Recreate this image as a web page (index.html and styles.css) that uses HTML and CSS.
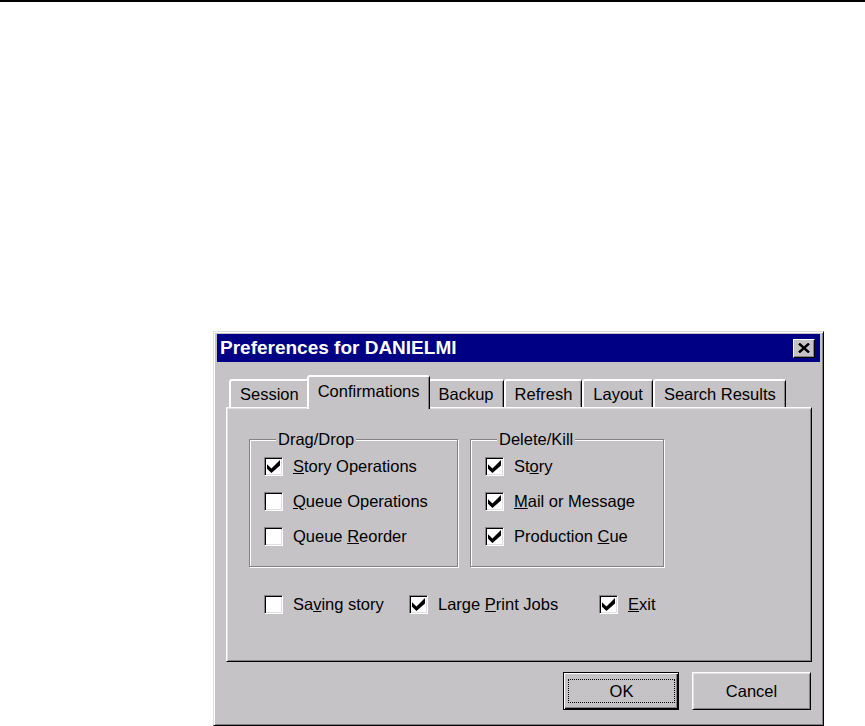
FILE: index.html
```html
<!DOCTYPE html>
<html lang="en">
<head>
    <meta charset="UTF-8" />
    <title>Preferences for DANIELMI</title>
    <link rel="stylesheet" href="styles.css">
</head>
<body>
    <div class="rule"></div>

    <div class="dialog">
        <div class="titlebar">
            <span class="title">Preferences for DANIELMI</span>
            <button class="close" aria-label="Close">
                <svg width="12" height="10" viewBox="0 0 12 10"><path d="M1 0.5 L11 9.5 M11 0.5 L1 9.5" stroke="#000" stroke-width="2.4" /></svg>
            </button>
        </div>

        <div class="dialog-body">
            <div class="tabs">
                <div class="tab">Session</div>
                <div class="tab active">Confirmations</div>
                <div class="tab">Backup</div>
                <div class="tab">Refresh</div>
                <div class="tab">Layout</div>
                <div class="tab">Search Results</div>
            </div>

            <div class="panel">
                <div class="groups">
                    <fieldset class="group group-drag">
                        <legend>Drag/Drop</legend>
                        <div class="rows">
                            <label class="check"><span class="box"><svg width="13" height="13" viewBox="0 0 7 7"><polygon points="0,2.3 2.4,4.6 7,0 7,2.9 2.4,7 0,4.7" /></svg></span><span><u>S</u>tory Operations</span></label>
                            <label class="check"><span class="box"></span><span><u>Q</u>ueue Operations</span></label>
                            <label class="check"><span class="box"></span><span>Queue <u>R</u>eorder</span></label>
                        </div>
                    </fieldset>

                    <fieldset class="group group-kill">
                        <legend>Delete/Kill</legend>
                        <div class="rows">
                            <label class="check"><span class="box"><svg width="13" height="13" viewBox="0 0 7 7"><polygon points="0,2.3 2.4,4.6 7,0 7,2.9 2.4,7 0,4.7" /></svg></span><span>St<u>o</u>ry</span></label>
                            <label class="check"><span class="box"><svg width="13" height="13" viewBox="0 0 7 7"><polygon points="0,2.3 2.4,4.6 7,0 7,2.9 2.4,7 0,4.7" /></svg></span><span><u>M</u>ail or Message</span></label>
                            <label class="check"><span class="box"><svg width="13" height="13" viewBox="0 0 7 7"><polygon points="0,2.3 2.4,4.6 7,0 7,2.9 2.4,7 0,4.7" /></svg></span><span>Production <u>C</u>ue</span></label>
                        </div>
                    </fieldset>
                </div>

                <div class="extra">
                    <label class="check"><span class="box"></span><span>Sa<u>v</u>ing story</span></label>
                    <label class="check"><span class="box"><svg width="13" height="13" viewBox="0 0 7 7"><polygon points="0,2.3 2.4,4.6 7,0 7,2.9 2.4,7 0,4.7" /></svg></span><span>Large <u>P</u>rint Jobs</span></label>
                    <label class="check"><span class="box"><svg width="13" height="13" viewBox="0 0 7 7"><polygon points="0,2.3 2.4,4.6 7,0 7,2.9 2.4,7 0,4.7" /></svg></span><span><u>E</u>xit</span></label>
                </div>
            </div>

            <div class="buttons">
                <button class="btn default"><span class="focus">OK</span></button>
                <button class="btn cancel">Cancel</button>
            </div>
        </div>
    </div>
</body>
</html>
```

FILE: styles.css
```css
    * { box-sizing: border-box; }
    body {
        margin: 0;
        background: #fff;
        color: #000;
        font-family: "Liberation Sans", Arial, sans-serif;
        font-size: 16.5px;
    }
    .rule {
        height: 2px;
        background: #000;
    }

    /* Window frame */
    .dialog {
        width: 611px;
        height: 395px;
        margin: 329px 0 0 213px;
        padding: 2px 3px 3px;
        background: #c6c3c6;
        border: 1px solid;
        border-color: #dedfde #000 #000 #dedfde;
        box-shadow: inset 1px 1px #fff, inset -1px -1px #848284;
    }
    .titlebar {
        height: 28px;
        display: flex;
        align-items: center;
        justify-content: space-between;
        padding: 0 5px 0 3px;
        background: #000084;
        color: #fff;
    }
    .title {
        font-size: 19px;
        font-weight: bold;
    }
    .close {
        width: 22px;
        height: 19px;
        padding: 0;
        display: flex;
        align-items: center;
        justify-content: center;
        background: #c6c3c6;
        border: 1px solid;
        border-color: #fff #000 #000 #fff;
        box-shadow: inset -1px -1px #848284;
    }
    .dialog-body {
        padding: 13px 8px 0 9px;
    }

    /* Tabs */
    .tabs {
        display: flex;
        align-items: flex-end;
        height: 32px;
        padding-left: 3px;
    }
    .tab {
        height: 28px;
        padding: 0 9px;
        line-height: 26px;
        white-space: nowrap;
        background: #c6c3c6;
        border-style: solid;
        border-width: 2px 1px 0 2px;
        border-color: #fff #000 transparent #fff;
        border-radius: 3px 3px 0 0;
        box-shadow: inset -1px 0 #848284;
    }
    .tab.active {
        position: relative;
        z-index: 1;
        height: 34px;
        margin: 0 -2px -2px;
        line-height: 28px;
    }
    .panel {
        height: 255px;
        padding: 22px 0 0 22px;
        border: 1px solid;
        border-color: #fff #000 #000 #fff;
        box-shadow: inset 1px 1px #dedfde, inset -1px -1px #848284;
    }

    /* Group boxes */
    .groups {
        display: flex;
        gap: 12px;
    }
    .group {
        margin: 0;
        padding: 0 14px 20px;
        border: 1px solid #848284;
        box-shadow: inset 1px 1px #fff, 1px 1px #fff;
    }
    .group-drag { width: 209px; }
    .group-kill { width: 194px; }
    .group legend {
        margin-left: 12px;
        padding: 0 2px;
        line-height: 19px;
        background: #c6c3c6;
    }
    .rows {
        margin-top: 8px;
        display: flex;
        flex-direction: column;
        gap: 16px;
    }

    /* Check boxes */
    .check {
        display: flex;
        align-items: center;
        gap: 10px;
        height: 19px;
        white-space: nowrap;
    }
    .box {
        flex: none;
        width: 19px;
        height: 19px;
        display: flex;
        align-items: center;
        justify-content: center;
        background: #fff;
        border: 1px solid;
        border-color: #848284 #fff #fff #848284;
        box-shadow: inset 1px 1px #000, inset -1px -1px #dedfde;
    }
    .extra {
        display: grid;
        grid-template-columns: 145px 190px auto;
        margin-top: 28px;
        padding-left: 15px;
    }

    /* Buttons */
    .buttons {
        display: flex;
        justify-content: flex-end;
        gap: 13px;
        margin-top: 10px;
        padding-right: 1px;
    }
    .btn {
        height: 38px;
        padding: 0;
        font: inherit;
        color: #000;
        background: #c6c3c6;
        border: 1px solid;
        border-color: #fff #000 #000 #fff;
        box-shadow: inset 1px 1px #dedfde, inset -1px -1px #848284;
    }
    .btn.default {
        width: 116px;
        padding: 6px 3px 6px 4px;
        border-color: #000;
        box-shadow: inset 1px 1px #fff, inset -1px -1px #000, inset -2px -2px #848284;
    }
    .btn.cancel { width: 119px; }
    .focus {
        height: 100%;
        display: flex;
        align-items: center;
        justify-content: center;
        border: 1px dotted #000;
    }
```
